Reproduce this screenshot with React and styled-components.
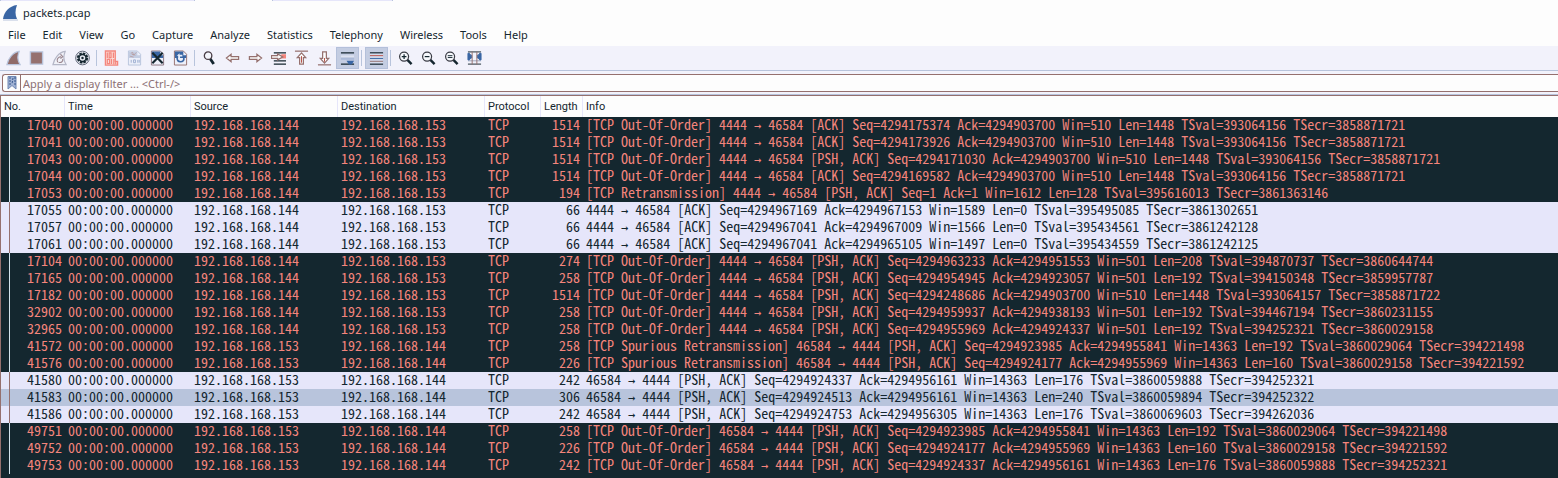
import React from "react";
import styled, { createGlobalStyle } from "styled-components";

const ui = `"Noto Sans", "Open Sans", sans-serif`;
const narrow = `Roboto, "Noto Sans", sans-serif`;
const mono = `"Noto Sans Mono CJK SC", "DejaVu Sans Mono", monospace`;
const ink = "#14262f";
const brown = "#95706e";
const steel = "#b8c4dc";
const lilac = "#e6e6fa";
const paper = "#fdfdfd";
const dark = "#14272f";
const blue = "#3a66a4";
const coral = "#f4857c";

const GlobalStyle = createGlobalStyle`
  * { box-sizing: border-box; }
  body { margin: 0; background: ${paper}; color: ${ink}; font: 11px/16px ${ui}; }
  button, input { font: inherit; color: inherit; }
`;

const Window = styled.div`
  height: 100vh;
  display: flex;
  flex-direction: column;
  overflow: hidden;
`;
const TabStrip = styled.div`
  height: 1px;
  flex: none;
  display: flex;
  gap: 77px;
`;
const TabEdge = styled.span`
  width: ${(p) => p.$width};
  background: ${lilac};
  border: solid ${steel};
  border-width: 0 1px;
`;
const TitleBar = styled.header`
  height: 24px;
  flex: none;
  display: flex;
  align-items: center;
  gap: 5px;
  padding-left: 3px;
`;
const Title = styled.h1`
  margin: 0;
  font-size: 11px;
  font-weight: 400;
`;
const MenuBar = styled.nav`
  height: 21px;
  flex: none;
  display: flex;
  gap: 1px;
  padding-bottom: 1px;
`;
const MenuItem = styled.button`
  border: 0;
  padding: 0 8px;
  background: none;
`;
const Toolbar = styled.div`
  height: 25px;
  flex: none;
  display: flex;
  align-items: center;
  padding-left: 2px;
  background: #f2f2fb;
  border-bottom: 1px solid ${steel};
`;
const ToolButton = styled.button`
  width: 23px;
  height: 22px;
  padding: 0;
  border: 1px solid ${(p) => (p.$on ? "#b4c0da" : "transparent")};
  background: ${(p) => (p.$on ? "#c4cde2" : "none")};
  display: flex;
  align-items: center;
  justify-content: center;
`;
const Separator = styled.span`
  width: 1px;
  height: 16px;
  margin: 0 3px 0 2px;
  background: ${steel};
`;
const FilterBar = styled.form`
  height: 24px;
  flex: none;
  padding: 3px 0 2px 2px;
  background: #f2f2fb;
  border-bottom: 1px solid ${steel};
`;
const FilterBox = styled.div`
  height: 18px;
  display: flex;
  border: 1px solid ${brown};
  border-right: 0;
  border-radius: 3px 0 0 3px;
  background: ${paper};
`;
const Bookmark = styled.button`
  width: 18px;
  padding: 0;
  border: 0;
  border-right: 1px solid ${brown};
  background: none;
  display: flex;
  align-items: center;
  justify-content: center;
`;
const FilterInput = styled.input`
  flex: 1;
  min-width: 0;
  border: 0;
  outline: 0;
  padding: 1px 2px 0;
  background: none;
  &::placeholder { color: #8c7074; opacity: 1; }
`;
const PacketList = styled.main`
  flex: 1;
  min-height: 0;
  overflow: hidden;
  border-top: 1px solid ${brown};
  border-left: 1px solid ${brown};
  background: ${dark};
`;
const Table = styled.table`
  width: 100%;
  table-layout: fixed;
  border-collapse: separate;
  border-spacing: 0;
`;
const Col = styled.col`
  width: ${(p) => p.$width};
`;
const HeadCell = styled.th`
  height: 21px;
  padding: 1px 3px 0;
  border-right: 1px solid ${lilac};
  background: ${paper};
  text-align: left;
  font-family: ${narrow};
  font-weight: 400;
  white-space: nowrap;
  &:last-child { border-right: 0; }
`;
const tones = {
  bad: { bg: dark, fg: coral, rail: "#d3e4ee" },
  tcp: { bg: lilac, fg: ink, rail: brown },
  selected: { bg: steel, fg: ink, rail: brown },
};
const Row = styled.tr`
  background: ${(p) => tones[p.$tone].bg};
  color: ${(p) => tones[p.$tone].fg};
  --rail: ${(p) => tones[p.$tone].rail};
`;
const Cell = styled.td`
  height: 17px;
  padding: 0 3px 2px;
  text-align: ${(p) => (p.$right ? "right" : "left")};
  font: 14px/15px ${mono};
  white-space: pre;
`;
const NumberCell = styled(Cell)`
  background: linear-gradient(var(--rail), var(--rail)) 8px 0 / 1px 100% no-repeat;
`;
const Arrow = styled.span`
  font: 12px/1px "DejaVu Sans Mono", monospace;
`;

const Svg = ({ children }) => (
  <svg width="15" height="16" viewBox="0 0 16 16" fill="none" aria-hidden="true">{children}</svg>
);
const Fin = ({ fill, edge }) => (
  <path d="M1 15C2.500 8.500 7 2 14 1C12 6 12 10.500 15 15Z" fill={fill} stroke={edge} strokeWidth="1.300" />
);
const Sheet = ({ line, band }) => (
  <>
    <path d="M1.500 .5H11L14.500 4V15.500H1.500Z" fill="#eef0fa" stroke={line} />
    <path d="M2 1H11V5H14V8H2Z" fill={band} />
  </>
);
const ArrowLeft = () => (
  <path d="M1.500 8L6.500 4V6.500H14.500V9.500H6.500V12Z" fill={paper} stroke={brown} strokeWidth="1.300" />
);
const Lens = ({ children }) => (
  <>
    <path d="M10 10L14.500 14.500" stroke={ink} strokeWidth="2.600" />
    <circle cx="6.500" cy="6.500" r="4.800" fill="#f6f8fc" stroke="#3b3d46" strokeWidth="1.300" />
    {children}
  </>
);

const icons = {
  start: <Fin fill="#8f6a68" edge={steel} />,
  stop: <path d="M1.500 1.500H14.500V14.500H1.500Z" fill={brown} stroke={steel} strokeWidth="1.500" />,
  restart: (
    <>
      <Fin fill="#f0f1f8" edge="#b4b6c6" />
      <path d="M6 12.500C4.500 9.500 6.500 7 9.500 6.500M9 4L11.500 6.500L9 8.500M11.500 9C12 12 9.500 13.500 7 12.500" stroke="#9b8790" strokeWidth="1.200" />
    </>
  ),
  options: (
    <>
      <circle cx="8" cy="8" r="7.300" fill="#e9ebf4" stroke="#596071" />
      <circle cx="8" cy="8" r="4.900" stroke={ink} strokeWidth="2.200" strokeDasharray="2.700 1.100" />
      <circle cx="8" cy="8" r="3.700" stroke={ink} strokeWidth="1.500" />
      <circle cx="8" cy="8" r="1.300" fill={ink} />
    </>
  ),
  open: (
    <>
      <path d="M1.500 .5H12V11.500H14.500V15.500H1.500Z" fill="#fbdcd7" stroke={coral} strokeWidth="1.400" />
      <path d="M3.500 2V8M5.500 2.500H7.500V7.500H5.500ZM10 2V8M3.500 9.500H6V14H3.500ZM8 9V14.500M10.500 9V15M12.500 12V15" stroke={coral} strokeWidth="1.300" />
    </>
  ),
  save: (
    <>
      <path d="M1.500 .5H11L14.500 4V15.500H1.500Z" fill="#eceffa" stroke={steel} />
      <path d="M2 1H11V5H14V8H2Z" fill="#c3cde2" />
      <path d="M4 3L6 2L7 5L10 2M3 6L7 7M5 4L9 5" stroke="#b5989b" strokeWidth=".8" />
      <path d="M4.500 10V13M7 10H9V13H7ZM11.500 10V13M13 10V13" stroke="#9daed0" />
    </>
  ),
  close: (
    <>
      <Sheet line="#8c7580" band={blue} />
      <path d="M2.500 2.500L13.500 13.500M13.500 2.500L2.500 13.500" stroke={ink} strokeWidth="2.300" />
    </>
  ),
  reload: (
    <>
      <Sheet line={brown} band={blue} />
      <path d="M4.500 7C4 10.500 5.500 12 8 12C10.500 12 12 10.500 11.500 7.500" stroke={blue} strokeWidth="1.800" />
      <path d="M5.500 9V5.500H4L7 3V4.500H10V6.500H7.500V9Z" fill="#e8edf8" />
    </>
  ),
  find: (
    <>
      <path d="M8.500 8.500L12.500 14.500" stroke={ink} strokeWidth="3" />
      <circle cx="6.500" cy="5.500" r="4" fill="#f4f5fb" stroke="#493d45" strokeWidth="1.400" />
    </>
  ),
  back: <ArrowLeft />,
  forward: <g transform="matrix(-1 0 0 1 16 0)"><ArrowLeft /></g>,
  goto: (
    <>
      <path d="M3 2.500H16M3 11H16M3 14.500H16" stroke={ink} strokeWidth="1.300" />
      <path d="M11 4H16V8.500H11Z" fill={coral} />
      <path d="M.5 5.500H7V3.500L12.500 7L7 10V8.500H.5Z" fill={paper} stroke={brown} strokeWidth="1.300" />
    </>
  ),
  first: (
    <>
      <path d="M1 .7H15" stroke={brown} strokeWidth="1.300" />
      <path d="M8 2.500L12.500 7.500H10V14.500H6V7.500H3.500Z" fill={paper} stroke={brown} strokeWidth="1.300" />
      <path d="M8 6V13" stroke="#b24a40" />
    </>
  ),
  last: (
    <>
      <path d="M1 15.300H15" stroke={brown} strokeWidth="1.300" />
      <path d="M8 13.500L12.500 8.500H10V1.500H6V8.500H3.500Z" fill={paper} stroke={brown} strokeWidth="1.300" />
      <path d="M8 8V12" stroke="#b24a40" />
    </>
  ),
  autoscroll: (
    <>
      <path d="M1 2.500H15M1 14.500H15" stroke={ink} strokeWidth="1.200" />
      <path d="M1 6H15" stroke="#eef1fa" />
      <path d="M1 9H15" stroke="#93a8ce" />
      <path d="M7 11H15L12.500 15H9.500Z" fill={blue} />
    </>
  ),
  colorize: (
    <>
      <path d="M1 2.500H15M1 14.500H15" stroke={ink} strokeWidth="1.200" />
      <path d="M1 5.500H15" stroke="#bd4e45" />
      <path d="M1 8.500H15" stroke={blue} />
      <path d="M1 11.500H15" stroke={brown} />
      <path d="M1 4H15M1 7H15M1 10H15M1 13H15" stroke="#dce1f0" />
    </>
  ),
  zoomIn: <Lens><path d="M4 6.500H9M6.500 4V9" stroke={ink} strokeWidth="1.300" /></Lens>,
  zoomOut: <Lens><path d="M4 6.500H9" stroke={ink} strokeWidth="1.300" /></Lens>,
  zoomReset: <Lens><path d="M4 5.500H9M4 7.500H9" stroke={ink} /></Lens>,
  resize: (
    <>
      <path d="M1 1.500H15M1 14.500H15" stroke={ink} />
      <path d="M1 11H15" stroke="#9aa5bb" />
      <path d="M1 3H2.500L4 5H5V8H4L2.500 10H1ZM15 3H13.500L12 5H11V8H12L13.500 10H15Z" fill={blue} stroke={blue} />
      <path d="M5.500 1V15M10.500 1V15" stroke={brown} />
    </>
  ),
};

const tools = [
  ["start", "Start capture"], ["stop", "Stop capture"], ["restart", "Restart capture"], ["options", "Capture options"], null,
  ["open", "Open"], ["save", "Save"], ["close", "Close"], ["reload", "Reload"], null,
  ["find", "Find packet"], ["back", "Previous packet"], ["forward", "Next packet"], ["goto", "Go to packet"],
  ["first", "First packet"], ["last", "Last packet"], ["autoscroll", "Auto scroll", true], null,
  ["colorize", "Colorize", true], null,
  ["zoomIn", "Zoom in"], ["zoomOut", "Zoom out"], ["zoomReset", "Normal size"], ["resize", "Resize columns"],
];

const menus = ["File", "Edit", "View", "Go", "Capture", "Analyze", "Statistics", "Telephony", "Wireless", "Tools", "Help"];

const A = "192.168.168.144";
const B = "192.168.168.153";
const OOO = "[TCP Out-Of-Order] ";
const out = "4444 → 46584 ";
const back = "46584 → 4444 ";
const packets = [
  [17040, A, 1514, OOO + out + "[ACK] Seq=4294175374 Ack=4294903700 Win=510 Len=1448 TSval=393064156 TSecr=3858871721"],
  [17041, A, 1514, OOO + out + "[ACK] Seq=4294173926 Ack=4294903700 Win=510 Len=1448 TSval=393064156 TSecr=3858871721"],
  [17043, A, 1514, OOO + out + "[PSH, ACK] Seq=4294171030 Ack=4294903700 Win=510 Len=1448 TSval=393064156 TSecr=3858871721"],
  [17044, A, 1514, OOO + out + "[ACK] Seq=4294169582 Ack=4294903700 Win=510 Len=1448 TSval=393064156 TSecr=3858871721"],
  [17053, A, 194, "[TCP Retransmission] " + out + "[PSH, ACK] Seq=1 Ack=1 Win=1612 Len=128 TSval=395616013 TSecr=3861363146"],
  [17055, A, 66, out + "[ACK] Seq=4294967169 Ack=4294967153 Win=1589 Len=0 TSval=395495085 TSecr=3861302651", "tcp"],
  [17057, A, 66, out + "[ACK] Seq=4294967041 Ack=4294967009 Win=1566 Len=0 TSval=395434561 TSecr=3861242128", "tcp"],
  [17061, A, 66, out + "[ACK] Seq=4294967041 Ack=4294965105 Win=1497 Len=0 TSval=395434559 TSecr=3861242125", "tcp"],
  [17104, A, 274, OOO + out + "[PSH, ACK] Seq=4294963233 Ack=4294951553 Win=501 Len=208 TSval=394870737 TSecr=3860644744"],
  [17165, A, 258, OOO + out + "[PSH, ACK] Seq=4294954945 Ack=4294923057 Win=501 Len=192 TSval=394150348 TSecr=3859957787"],
  [17182, A, 1514, OOO + out + "[PSH, ACK] Seq=4294248686 Ack=4294903700 Win=510 Len=1448 TSval=393064157 TSecr=3858871722"],
  [32902, A, 258, OOO + out + "[PSH, ACK] Seq=4294959937 Ack=4294938193 Win=501 Len=192 TSval=394467194 TSecr=3860231155"],
  [32965, A, 258, OOO + out + "[PSH, ACK] Seq=4294955969 Ack=4294924337 Win=501 Len=192 TSval=394252321 TSecr=3860029158"],
  [41572, B, 258, "[TCP Spurious Retransmission] " + back + "[PSH, ACK] Seq=4294923985 Ack=4294955841 Win=14363 Len=192 TSval=3860029064 TSecr=394221498"],
  [41576, B, 226, "[TCP Spurious Retransmission] " + back + "[PSH, ACK] Seq=4294924177 Ack=4294955969 Win=14363 Len=160 TSval=3860029158 TSecr=394221592"],
  [41580, B, 242, back + "[PSH, ACK] Seq=4294924337 Ack=4294956161 Win=14363 Len=176 TSval=3860059888 TSecr=394252321", "tcp"],
  [41583, B, 306, back + "[PSH, ACK] Seq=4294924513 Ack=4294956161 Win=14363 Len=240 TSval=3860059894 TSecr=394252322", "selected"],
  [41586, B, 242, back + "[PSH, ACK] Seq=4294924753 Ack=4294956305 Win=14363 Len=176 TSval=3860069603 TSecr=394262036", "tcp"],
  [49751, B, 258, OOO + back + "[PSH, ACK] Seq=4294923985 Ack=4294955841 Win=14363 Len=192 TSval=3860029064 TSecr=394221498"],
  [49752, B, 226, OOO + back + "[PSH, ACK] Seq=4294924177 Ack=4294955969 Win=14363 Len=160 TSval=3860029158 TSecr=394221592"],
  [49753, B, 242, OOO + back + "[PSH, ACK] Seq=4294924337 Ack=4294956161 Win=14363 Len=176 TSval=3860059888 TSecr=394252321"],
];

const columns = [
  ["No.", "64px"], ["Time", "126px"], ["Source", "147px"], ["Destination", "147px"],
  ["Protocol", "56px"], ["Length", "42px"], ["Info", "auto"],
];

function Info({ text }) {
  const [before, after] = text.split("→");
  return <>{before}<Arrow>→</Arrow>{after}</>;
}

export default function App() {
  return (
    <Window>
      <GlobalStyle />
      <TabStrip>
        <TabEdge $width="195px" />
        <TabEdge $width="121px" />
      </TabStrip>
      <TitleBar>
        <svg width="15" height="16" viewBox="0 0 15 16" aria-hidden="true">
          <path d="M0 14C1 7 6 1 14 0C12 5 12 10 14 14Z" fill={blue} />
          <path d="M0 15H15" stroke={steel} />
        </svg>
        <Title>packets.pcap</Title>
      </TitleBar>
      <MenuBar>
        {menus.map((m) => <MenuItem key={m} type="button">{m}</MenuItem>)}
      </MenuBar>
      <Toolbar role="toolbar">
        {tools.map((t, i) => t ? (
          <ToolButton key={t[0]} type="button" aria-label={t[1]} $on={t[2]}>
            <Svg>{icons[t[0]]}</Svg>
          </ToolButton>
        ) : <Separator key={i} />)}
      </Toolbar>
      <FilterBar onSubmit={(e) => e.preventDefault()}>
        <FilterBox>
          <Bookmark type="button" aria-label="Filter bookmarks">
            <svg width="10" height="14" viewBox="0 0 10 14" aria-hidden="true">
              <path d="M1 .5H9V13L5 9.500L1 13Z" fill="#9fb1d3" stroke="#7088b4" />
              <path d="M3 1V10M6 2L5 8M8 1V10" stroke="#34568c" strokeDasharray="2 1" />
            </svg>
          </Bookmark>
          <FilterInput type="text" aria-label="Display filter" placeholder="Apply a display filter ... <Ctrl-/>" />
        </FilterBox>
      </FilterBar>
      <PacketList>
        <Table>
          <colgroup>{columns.map(([n, w]) => <Col key={n} $width={w} />)}</colgroup>
          <thead>
            <tr>{columns.map(([n]) => <HeadCell key={n} scope="col">{n}</HeadCell>)}</tr>
          </thead>
          <tbody>
            {packets.map(([no, src, len, info, tone = "bad"]) => (
              <Row key={no} $tone={tone} aria-selected={tone === "selected"}>
                <NumberCell $right>{no}</NumberCell>
                <Cell>00:00:00.000000</Cell>
                <Cell>{src}</Cell>
                <Cell>{src === A ? B : A}</Cell>
                <Cell>TCP</Cell>
                <Cell $right>{len}</Cell>
                <Cell><Info text={info} /></Cell>
              </Row>
            ))}
          </tbody>
        </Table>
      </PacketList>
    </Window>
  );
}
